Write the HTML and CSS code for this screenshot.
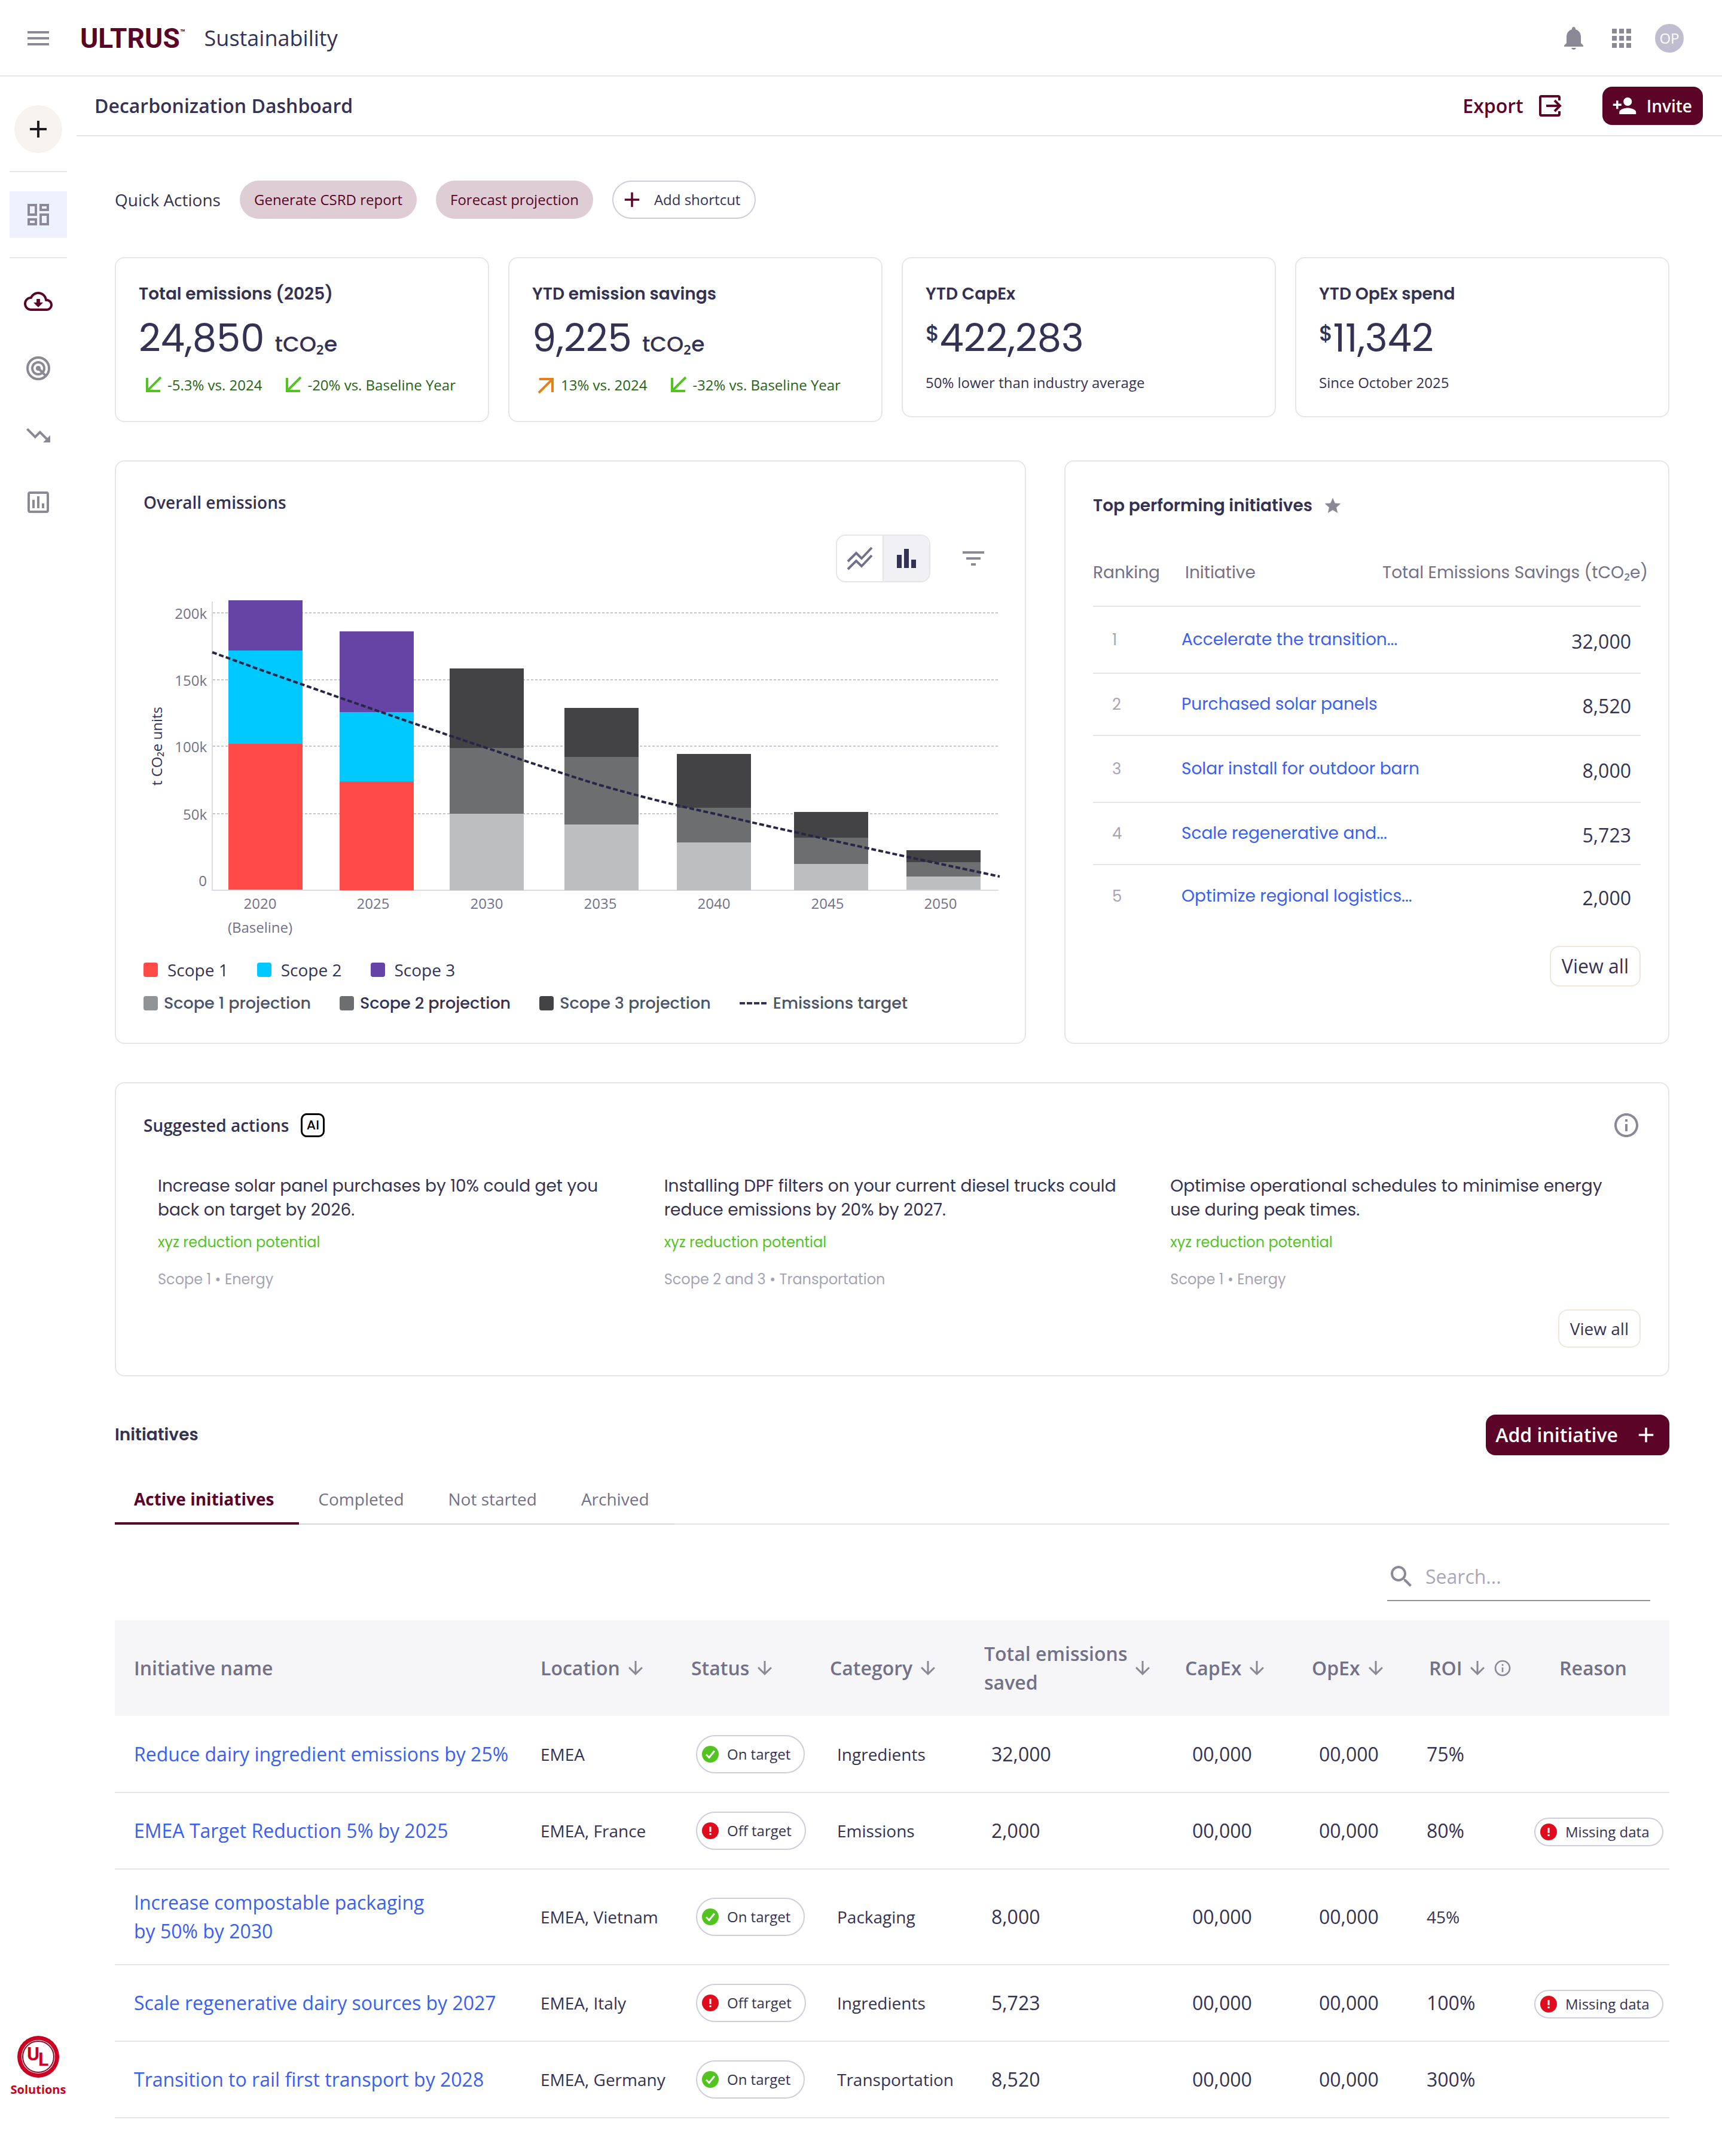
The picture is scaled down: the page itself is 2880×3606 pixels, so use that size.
FILE: index.html
```html
<!DOCTYPE html>
<html lang="en">
<head>
<meta charset="utf-8">
<title>ULTRUS Sustainability - Decarbonization Dashboard</title>
<link rel="stylesheet" href="styles.css">
</head>
<body>

<!-- Icon sprite -->
<svg class="sprite" aria-hidden="true">
  <symbol id="i-plus" viewBox="0 0 24 24"><path d="M19 13h-6v6h-2v-6H5v-2h6V5h2v6h6v2z"/></symbol>
  <symbol id="i-down" viewBox="0 0 24 24"><path d="M20 12l-1.41-1.41L13 16.17V4h-2v12.17l-5.58-5.59L4 12l8 8 8-8z"/></symbol>
  <symbol id="i-info" viewBox="0 0 24 24"><path d="M11 7h2v2h-2zm0 4h2v6h-2zm1-9C6.48 2 2 6.48 2 12s4.48 10 10 10 10-4.48 10-10S17.52 2 12 2zm0 18c-4.41 0-8-3.59-8-8s3.59-8 8-8 8 3.59 8 8-3.59 8-8 8z"/></symbol>
  <symbol id="i-fall" viewBox="0 0 32 32"><path d="M6 4v22h22M6.500 25.500L29 3" fill="none" stroke="currentColor" stroke-width="4"/></symbol>
  <symbol id="i-rise" viewBox="0 0 32 32"><path d="M4 6h22v22M25.500 6.500L3 29" fill="none" stroke="currentColor" stroke-width="4"/></symbol>
  <symbol id="i-ok" viewBox="0 0 28 28"><circle cx="14" cy="14" r="14" fill="#52c41f"/><path d="M7 14.500l5 5 9-11" fill="none" stroke="#fff" stroke-width="3"/></symbol>
  <symbol id="i-bad" viewBox="0 0 28 28"><circle cx="14" cy="14" r="14" fill="#e00b1c"/><path d="M12.500 7h3v9h-3zM12.500 18h3v3h-3z" fill="#fff"/></symbol>
</svg>

<header class="topbar">
  <button class="icon-btn menu-btn" aria-label="Menu"><svg class="icon" viewBox="0 0 24 24"><path d="M3 18h18v-2H3v2zm0-5h18v-2H3v2zm0-7v2h18V6H3z"/></svg></button>
  <a class="brand" href="#">ULTRUS<span class="tm">™</span></a>
  <span class="product">Sustainability</span>
  <div class="topbar-tools">
    <button class="icon-btn" aria-label="Notifications"><svg class="icon" viewBox="0 0 24 24"><path d="M12 21.500c1.100 0 2-.9 2-1.500h-4c0 .6.89 1.500 2 1.500zm6-5.500v-5c0-3.070-1.640-5.640-4.500-6.320V4c0-.83-.67-1.500-1.500-1.500s-1.500.67-1.500 1.500v.68C7.630 5.360 6 7.920 6 11v5l-2 2v1h16v-1l-2-2z"/></svg></button>
    <button class="icon-btn" aria-label="Apps"><svg class="icon" viewBox="0 0 24 24"><path d="M4 8h4V4H4v4zm6 12h4v-4h-4v4zm-6 0h4v-4H4v4zm0-6h4v-4H4v4zm6 0h4v-4h-4v4zm6-10v4h4V4h-4zm-6 4h4V4h-4v4zm6 6h4v-4h-4v4zm0 6h4v-4h-4v4z"/></svg></button>
    <button class="avatar">OP</button>
  </div>
</header>

<div class="app">
<nav class="sidebar" aria-label="Main">
  <button class="add-btn" aria-label="Add"><svg class="icon" viewBox="0 0 24 24"><use href="#i-plus"/></svg></button>
  <a class="nav-item ruled active" href="#" aria-label="Dashboard"><svg class="icon" viewBox="0 0 24 24"><path d="M19 5v2h-4V5h4M9 5v6H5V5h4m10 8v6h-4v-6h4M9 17v2H5v-2h4M21 3h-8v6h8V3zM11 3H3v10h8V3zm10 8h-8v10h8V11zm-10 4H3v6h8v-6z"/></svg></a>
  <a class="nav-item data" href="#" aria-label="Data collection"><svg class="icon" viewBox="0 0 24 24"><path d="M19.350 10.040C18.670 6.590 15.640 4 12 4 9.110 4 6.600 5.640 5.350 8.040 2.340 8.360 0 10.910 0 14c0 3.310 2.690 6 6 6h13c2.760 0 5-2.240 5-5 0-2.640-2.050-4.780-4.650-4.960zM19 18H6c-2.210 0-4-1.790-4-4 0-2.050 1.530-3.760 3.560-3.970l1.070-.11.5-.95C8.080 7.140 9.940 6 12 6c2.620 0 4.880 1.860 5.390 4.430l.3 1.500 1.530.11c1.560.1 2.780 1.410 2.780 2.960 0 1.650-1.350 3-3 3zm-5.550-8h-2.900v3H8l4 4 4-4h-2.550z"/></svg></a>
  <a class="nav-item" href="#" aria-label="Targets"><svg class="icon" viewBox="0 0 24 24"><g fill="none" stroke="currentColor" stroke-width="2"><circle cx="12" cy="12" r="9"/><circle cx="12" cy="12" r="5"/><path d="M12 12l6.500 6.500"/></g><circle cx="12" cy="12" r="2"/></svg></a>
  <a class="nav-item" href="#" aria-label="Reductions"><svg class="icon" viewBox="0 0 24 24"><path d="M16 18l2.290-2.290-4.880-4.880-4 4L2 7.410 3.410 6l6 6 4-4 6.300 6.290L22 12v6z"/></svg></a>
  <a class="nav-item" href="#" aria-label="Reports"><svg class="icon" viewBox="0 0 24 24"><path d="M9 17H7v-7h2v7zm4 0h-2V7h2v10zm4 0h-2v-4h2v4zm2 2H5V5h14v14zm0-16H5c-1.100 0-2 .9-2 2v14c0 1.100.9 2 2 2h14c1.100 0 2-.9 2-2V5c0-1.100-.9-2-2-2z"/></svg></a>
  <a class="ul-logo" href="#">
    <svg viewBox="0 0 70 70" aria-label="UL">
      <circle cx="35" cy="35" r="35" fill="#ca0123"/>
      <circle cx="35" cy="35" r="28" fill="#fff"/>
      <circle cx="35" cy="35" r="26" fill="none" stroke="#8a0a2a" stroke-width="2"/>
      <text x="16" y="41" class="ul-text">U</text>
      <text x="35" y="50" class="ul-text">L</text>
    </svg>
    <span>Solutions</span>
  </a>
</nav>

<main>
<div class="page-head">
  <h1>Decarbonization Dashboard</h1>
  <button class="export-btn">Export <svg class="icon" viewBox="0 0 48 48"><g fill="none" stroke="currentColor" stroke-width="4"><path d="M40 15V10q0-2-2-2H10q-2 0-2 2v28q0 2 2 2h28q2 0 2-2v-5"/><path d="M18 24h22M32 15l9 9-9 9"/></g></svg></button>
  <button class="primary-btn"><svg class="icon" viewBox="0 0 24 24"><path d="M15 12c2.210 0 4-1.790 4-4s-1.790-4-4-4-4 1.790-4 4 1.790 4 4 4zm-9-2V7H4v3H1v2h3v3h2v-3h3v-2H6zm9 4c-2.670 0-8 1.340-8 4v2h16v-2c0-2.660-5.330-4-8-4z"/></svg> Invite</button>
</div>

<div class="content">

<div class="quick">
  <span class="quick-label">Quick Actions</span>
  <button class="pill">Generate CSRD report</button>
  <button class="pill">Forecast projection</button>
  <button class="pill pill-outline"><svg class="icon" viewBox="0 0 24 24"><use href="#i-plus"/></svg> Add shortcut</button>
</div>

<section class="stats">
  <article class="card stat">
    <h2>Total emissions (2025)</h2>
    <p class="value">24,850 <span class="unit">tCO₂e</span></p>
    <p class="trends">
      <span class="trend down"><svg viewBox="0 0 32 32"><use href="#i-fall"/></svg>-5.3% vs. 2024</span>
      <span class="trend down"><svg viewBox="0 0 32 32"><use href="#i-fall"/></svg>-20% vs. Baseline Year</span>
    </p>
  </article>
  <article class="card stat">
    <h2>YTD emission savings</h2>
    <p class="value">9,225 <span class="unit">tCO₂e</span></p>
    <p class="trends">
      <span class="trend up"><svg viewBox="0 0 32 32"><use href="#i-rise"/></svg>13% vs. 2024</span>
      <span class="trend down"><svg viewBox="0 0 32 32"><use href="#i-fall"/></svg>-32% vs. Baseline Year</span>
    </p>
  </article>
  <article class="card stat">
    <h2>YTD CapEx</h2>
    <p class="value"><span class="cur">$</span>422,283</p>
    <p class="note">50% lower than industry average</p>
  </article>
  <article class="card stat">
    <h2>YTD OpEx spend</h2>
    <p class="value"><span class="cur">$</span>11,342</p>
    <p class="note">Since October 2025</p>
  </article>
</section>

<div class="panels">
<section class="card overall">
  <h2>Overall emissions</h2>
  <div class="chart-tools">
    <div class="toggle">
      <button aria-label="Line chart"><svg class="icon" viewBox="0 0 48 48"><g fill="none" stroke="currentColor" stroke-width="4"><path d="M4 29l14-14 9 9L44 6"/><path d="M4 42l14-14 9 9L44 19"/></g></svg></button>
      <button class="on" aria-label="Bar chart"><svg class="icon" viewBox="0 0 48 48"><path d="M8 18h8v22H8zM20 8h8v32h-8zM32 26h8v14h-8z"/></svg></button>
    </div>
    <button class="icon-btn" aria-label="Filter"><svg class="icon" viewBox="0 0 24 24"><path d="M10 18h4v-2h-4v2zM3 6v2h18V6H3zm3 7h12v-2H6v2z"/></svg></button>
  </div>

  <svg class="chart" viewBox="0 0 1428 576" role="img" aria-label="Emissions by scope, 2020 to 2050">
    <g class="grid">
      <path d="M116 25H1430M116 137H1430M116 248H1430M116 361H1430"/>
    </g>
    <path class="axis" d="M115 6V489H1430"/>
    <g class="y-labels">
      <text x="106" y="35">200k</text>
      <text x="106" y="147">150k</text>
      <text x="106" y="258">100k</text>
      <text x="106" y="371">50k</text>
      <text x="106" y="482">0</text>
    </g>
    <text class="axis-title" transform="translate(31 248) rotate(-90)">t CO₂e units</text>
    <g class="s1">
      <rect x="142" y="244" width="124" height="244"/>
      <rect x="328" y="307" width="124" height="182"/>
    </g>
    <g class="s2">
      <rect x="142" y="88" width="124" height="156"/>
      <rect x="328" y="191" width="124" height="116"/>
    </g>
    <g class="s3">
      <rect x="142" y="4" width="124" height="84"/>
      <rect x="328" y="56" width="124" height="135"/>
    </g>
    <g class="p1">
      <rect x="512" y="361" width="124" height="128"/>
      <rect x="704" y="379" width="124" height="110"/>
      <rect x="892" y="409" width="124" height="80"/>
      <rect x="1088" y="445" width="124" height="44"/>
      <rect x="1276" y="466" width="124" height="22"/>
    </g>
    <g class="p2">
      <rect x="512" y="251" width="124" height="110"/>
      <rect x="704" y="266" width="124" height="113"/>
      <rect x="892" y="351" width="124" height="58"/>
      <rect x="1088" y="401" width="124" height="44"/>
      <rect x="1276" y="442" width="124" height="24"/>
    </g>
    <g class="p3">
      <rect x="512" y="118" width="124" height="133"/>
      <rect x="704" y="184" width="124" height="82"/>
      <rect x="892" y="261" width="124" height="90"/>
      <rect x="1088" y="358" width="124" height="43"/>
      <rect x="1276" y="422" width="124" height="20"/>
    </g>
    <path class="target" d="M115 91L195 120C320 164 450 210 577 252C640 273 700 294 763 313C830 332 890 347 955 361C1080 390 1200 417 1432 466"/>
    <g class="x-labels">
      <text x="195" y="520">2020</text>
      <text x="195" y="560">(Baseline)</text>
      <text x="384" y="520">2025</text>
      <text x="574" y="520">2030</text>
      <text x="764" y="520">2035</text>
      <text x="954" y="520">2040</text>
      <text x="1144" y="520">2045</text>
      <text x="1333" y="520">2050</text>
    </g>
  </svg>

  <ul class="legend legend-actual">
    <li><i class="sw c1"></i>Scope 1</li>
    <li><i class="sw c2"></i>Scope 2</li>
    <li><i class="sw c3"></i>Scope 3</li>
  </ul>
  <ul class="legend legend-proj">
    <li><i class="sw c4"></i>Scope 1 projection</li>
    <li class="strong"><i class="sw c5"></i>Scope 2 projection</li>
    <li><i class="sw c6"></i>Scope 3 projection</li>
    <li><svg class="dash" viewBox="0 0 46 4"><path d="M0 2h46" stroke="#343254" stroke-width="4" stroke-dasharray="9 3"/></svg>Emissions target</li>
  </ul>
</section>

<section class="card top">
  <h2>Top performing initiatives <svg class="star" viewBox="0 0 24 24"><path d="M12 17.270L18.180 21l-1.640-7.030L22 9.240l-7.190-.61L12 2 9.190 8.630 2 9.240l5.460 4.730L5.820 21z"/></svg></h2>
  <table class="rank">
    <thead>
      <tr><th class="r-no">Ranking</th><th class="r-name">Initiative</th><th class="r-val"><span>Total Emissions Savings (tCO₂e)</span></th></tr>
    </thead>
    <tbody>
      <tr class="tall"><td>1</td><td><a href="#">Accelerate the transition...</a></td><td>32,000</td></tr>
      <tr><td>2</td><td><a href="#">Purchased solar panels</a></td><td>8,520</td></tr>
      <tr class="tall"><td>3</td><td><a href="#">Solar install for outdoor barn</a></td><td>8,000</td></tr>
      <tr><td>4</td><td><a href="#">Scale regenerative and...</a></td><td>5,723</td></tr>
      <tr><td>5</td><td><a href="#">Optimize regional logistics...</a></td><td>2,000</td></tr>
    </tbody>
  </table>
  <button class="ghost-btn large">View all</button>
</section>
</div>

<section class="card suggested">
  <div class="suggested-head">
    <h2>Suggested actions</h2><span class="ai">AI</span>
    <button class="icon-btn" aria-label="About suggestions"><svg class="icon" viewBox="0 0 24 24"><use href="#i-info"/></svg></button>
  </div>
  <div class="suggestions">
    <article>
      <p class="what">Increase solar panel purchases by 10% could get you<br>back on target by 2026.</p>
      <p class="gain">xyz reduction potential</p>
      <p class="scope">Scope 1 • Energy</p>
    </article>
    <article>
      <p class="what">Installing DPF filters on your current diesel trucks could<br>reduce emissions by 20% by 2027.</p>
      <p class="gain">xyz reduction potential</p>
      <p class="scope">Scope 2 and 3 • Transportation</p>
    </article>
    <article>
      <p class="what">Optimise operational schedules to minimise energy<br>use during peak times.</p>
      <p class="gain">xyz reduction potential</p>
      <p class="scope">Scope 1 • Energy</p>
    </article>
  </div>
  <button class="ghost-btn">View all</button>
</section>

<section class="initiatives">
  <div class="init-head">
    <h2>Initiatives</h2>
    <button class="primary-btn add-init">Add initiative <svg class="icon" viewBox="0 0 24 24"><use href="#i-plus"/></svg></button>
  </div>
  <div class="tabs" role="tablist">
    <button role="tab" class="tab active" aria-selected="true">Active initiatives</button>
    <button role="tab" class="tab">Completed</button>
    <button role="tab" class="tab">Not started</button>
    <button role="tab" class="tab">Archived</button>
  </div>
  <label class="search">
    <svg class="icon" viewBox="0 0 24 24"><path d="M15.500 14h-.79l-.28-.27C15.410 12.590 16 11.110 16 9.500 16 5.910 13.090 3 9.500 3S3 5.910 3 9.500 5.910 16 9.500 16c1.610 0 3.090-.59 4.230-1.570l.27.28v.79l5 4.990L20.490 19l-4.990-5zm-6 0C7.010 14 5 11.990 5 9.500S7.010 5 9.500 5 14 7.010 14 9.500 11.990 14 9.500 14z"/></svg>
    <input type="search" placeholder="Search..." aria-label="Search initiatives">
  </label>

  <table class="list">
    <colgroup>
      <col><col class="w-loc"><col class="w-status"><col class="w-cat"><col class="w-total"><col class="w-capex"><col class="w-opex"><col class="w-roi"><col class="w-reason">
    </colgroup>
    <thead>
      <tr>
        <th class="name">Initiative name</th>
        <th><button class="sort">Location <svg viewBox="0 0 24 24"><use href="#i-down"/></svg></button></th>
        <th><button class="sort">Status <svg viewBox="0 0 24 24"><use href="#i-down"/></svg></button></th>
        <th><button class="sort">Category <svg viewBox="0 0 24 24"><use href="#i-down"/></svg></button></th>
        <th><button class="sort"><span>Total emissions<br>saved</span> <svg viewBox="0 0 24 24"><use href="#i-down"/></svg></button></th>
        <th><button class="sort">CapEx <svg viewBox="0 0 24 24"><use href="#i-down"/></svg></button></th>
        <th><button class="sort">OpEx <svg viewBox="0 0 24 24"><use href="#i-down"/></svg></button></th>
        <th class="roi"><button class="sort">ROI <svg viewBox="0 0 24 24"><use href="#i-down"/></svg><svg class="info" viewBox="0 0 24 24"><use href="#i-info"/></svg></button></th>
        <th class="reason">Reason</th>
      </tr>
    </thead>
    <tbody>
      <tr>
        <td class="name"><a href="#">Reduce dairy ingredient emissions by 25%</a></td>
        <td class="small">EMEA</td>
        <td class="status"><span class="chip"><svg viewBox="0 0 28 28"><use href="#i-ok"/></svg>On target</span></td>
        <td class="small in">Ingredients</td>
        <td class="in">32,000</td><td class="in">00,000</td><td class="in">00,000</td><td>75%</td><td></td>
      </tr>
      <tr>
        <td class="name"><a href="#">EMEA Target Reduction 5% by 2025</a></td>
        <td class="small">EMEA, France</td>
        <td class="status"><span class="chip"><svg viewBox="0 0 28 28"><use href="#i-bad"/></svg>Off target</span></td>
        <td class="small in">Emissions</td>
        <td class="in">2,000</td><td class="in">00,000</td><td class="in">00,000</td><td>80%</td>
        <td><span class="chip flat"><svg viewBox="0 0 28 28"><use href="#i-bad"/></svg>Missing data</span></td>
      </tr>
      <tr class="tall">
        <td class="name"><a href="#">Increase compostable packaging<br>by 50% by 2030</a></td>
        <td class="small">EMEA, Vietnam</td>
        <td class="status"><span class="chip"><svg viewBox="0 0 28 28"><use href="#i-ok"/></svg>On target</span></td>
        <td class="small in">Packaging</td>
        <td class="in">8,000</td><td class="in">00,000</td><td class="in">00,000</td><td class="small">45%</td><td></td>
      </tr>
      <tr>
        <td class="name"><a href="#">Scale regenerative dairy sources by 2027</a></td>
        <td class="small">EMEA, Italy</td>
        <td class="status"><span class="chip"><svg viewBox="0 0 28 28"><use href="#i-bad"/></svg>Off target</span></td>
        <td class="small in">Ingredients</td>
        <td class="in">5,723</td><td class="in">00,000</td><td class="in">00,000</td><td>100%</td>
        <td><span class="chip flat"><svg viewBox="0 0 28 28"><use href="#i-bad"/></svg>Missing data</span></td>
      </tr>
      <tr>
        <td class="name"><a href="#">Transition to rail first transport by 2028</a></td>
        <td class="small">EMEA, Germany</td>
        <td class="status"><span class="chip"><svg viewBox="0 0 28 28"><use href="#i-ok"/></svg>On target</span></td>
        <td class="small in">Transportation</td>
        <td class="in">8,520</td><td class="in">00,000</td><td class="in">00,000</td><td>300%</td><td></td>
      </tr>
    </tbody>
  </table>
</section>

</div>
</main>
</div>

</body>
</html>
```
FILE: styles.css
```css
:root {
  --ink: #343254;
  --muted: #727188;
  --icon: #8a8995;
  --brand: #5b0428;
  --link: #3960f3;
  --line: #e6e6ea;
  --body: "Open Sans", "Noto Sans", sans-serif;
  --display: Poppins, "Noto Sans", sans-serif;
}

* { box-sizing: border-box; }

body {
  margin: 0;
  min-height: 100vh;
  display: flex;
  flex-direction: column;
  background: #fff;
  color: var(--ink);
  font: 28px/40px var(--body);
}

h1, h2, p, ul { margin: 0; padding: 0; }
h2 { font: 600 28px/40px var(--display); }
a { color: var(--link); text-decoration: none; }
table { border-collapse: collapse; width: 100%; }
th, td { padding: 0; text-align: left; font-weight: 400; }

button {
  padding: 0;
  border: 0;
  background: none;
  color: inherit;
  font: inherit;
  cursor: pointer;
}

svg { display: block; flex: none; fill: currentColor; }
.sprite { position: absolute; width: 0; height: 0; }
.icon { width: 48px; height: 48px; }
.icon-btn { color: var(--icon); }

/* Top bar */
.topbar {
  display: flex;
  align-items: center;
  height: 128px;
  padding: 2px 64px 0 40px;
  border-bottom: 2px solid var(--line);
}
.brand {
  display: flex;
  margin-left: 46px;
  color: var(--brand);
  font: 700 46px/48px Roboto, sans-serif;
}
.tm { font-size: 14px; line-height: 28px; }
.product { margin-left: 32px; font-size: 36px; line-height: 48px; }
.topbar-tools { display: flex; gap: 32px; margin-left: auto; }
.avatar {
  width: 48px;
  height: 48px;
  border-radius: 50%;
  background: #c0bdd0;
  color: #fff;
  font-size: 24px;
  line-height: 48px;
}

/* Side navigation */
.app { display: flex; flex: 1; }
.sidebar {
  display: flex;
  flex: none;
  flex-direction: column;
  align-items: center;
  width: 128px;
  padding: 48px 16px 100px;
}
.add-btn {
  display: flex;
  align-items: center;
  justify-content: center;
  width: 80px;
  height: 80px;
  margin-bottom: 30px;
  border-radius: 50%;
  background: #f7f4ef;
  color: #1d1b20;
}
.nav-item {
  display: flex;
  align-items: center;
  justify-content: center;
  width: 96px;
  height: 112px;
  color: var(--icon);
}
.ruled {
  height: 146px;
  margin-bottom: 16px;
  padding: 32px 0;
  border: solid var(--line);
  border-width: 2px 0;
}
.active.nav-item { background: #eef1ff content-box; }
.data { color: var(--brand); }
.ul-logo {
  display: flex;
  flex-direction: column;
  align-items: center;
  gap: 8px;
  margin-top: auto;
  color: #ca0123;
  font: 700 20px/24px var(--body);
}
.ul-logo svg { width: 70px; height: 70px; }
.ul-text { font: 700 32px Roboto, sans-serif; }

/* Page heading */
main { flex: 1; min-width: 0; }
.page-head {
  display: flex;
  align-items: center;
  height: 100px;
  padding: 0 32px 0 30px;
  border-bottom: 2px solid var(--line);
}
h1 { font: 600 32px/40px var(--body); }
.export-btn {
  display: flex;
  align-items: center;
  gap: 20px;
  margin-left: auto;
  color: var(--brand);
  font-size: 32px;
  font-weight: 600;
}
.primary-btn {
  display: flex;
  align-items: center;
  gap: 16px;
  height: 64px;
  margin-left: 64px;
  padding: 0 18px 0 16px;
  border-radius: 16px;
  background: var(--brand);
  color: #fff;
  font-size: 28px;
  font-weight: 600;
}
.primary-btn .icon { width: 42px; height: 42px; }

.content {
  display: flex;
  flex-direction: column;
  gap: 64px;
  padding: 74px 88px 64px 64px;
}

/* Quick actions */
.quick { display: flex; align-items: center; gap: 32px; }
.pill {
  display: flex;
  align-items: center;
  height: 64px;
  padding: 0 24px;
  border-radius: 32px;
  background: #decdd4;
  color: var(--brand);
  font-size: 24px;
}
.pill-outline {
  gap: 16px;
  padding: 0 24px 0 10px;
  border: 2px solid #cfcddc;
  background: #fff;
  color: var(--ink);
}
.pill-outline .icon { width: 42px; height: 42px; color: var(--brand); }

/* Cards */
.card { border: 2px solid var(--line); border-radius: 16px; }

.stats {
  display: grid;
  grid-template-columns: repeat(4, 1fr);
  align-items: start;
  gap: 32px;
}
.stat { padding: 40px 36px 40px 38px; }
.value { margin-top: 16px; font: 400 64px/76px var(--display); }
.unit { font-size: 36px; font-weight: 500; line-height: 36px; }
.cur { font-size: 36px; font-weight: 500; line-height: 36px; vertical-align: 18px; }
.trends {
  display: flex;
  gap: 36px;
  margin: 24px 0 4px 8px;
  white-space: nowrap;
}
.trend { display: flex; gap: 8px; color: #276414; font-size: 24px; line-height: 32px; }
.trend svg { width: 32px; height: 32px; }
.down svg { color: #52c41f; }
.up svg { color: #e8801a; }
.note { margin-top: 20px; font-size: 24px; line-height: 32px; }

.panels { display: grid; grid-template-columns: 1524fr 1012fr; gap: 64px; }
.overall { padding: 48px 46px 46px; }
.top { padding: 54px 46px 46px; }

/* Emissions chart */
.overall h2, .suggested h2 { font: 600 28px/40px var(--body); }
.chart-tools {
  display: flex;
  align-items: center;
  justify-content: flex-end;
  gap: 48px;
  margin: 34px 16px 26px 0;
}
.toggle {
  display: flex;
  overflow: hidden;
  border: 2px solid var(--line);
  border-radius: 16px;
  color: var(--muted);
}
.toggle button { padding: 14px; }
.toggle .on { border-left: 2px solid var(--line); background: #f1f0f4; color: var(--ink); }
.chart { width: 100%; overflow: visible; }
.chart text { font: 24px var(--body); fill: var(--muted); }
.grid path { stroke: #c5c4d2; stroke-width: 2; stroke-dasharray: 4 3; }
.axis { fill: none; stroke: #dcdbe4; stroke-width: 2; }
.y-labels { text-anchor: end; }
.x-labels, .axis-title { text-anchor: middle; }
.chart .axis-title { fill: var(--ink); }
.s1 { fill: #ff4a48; }
.s2 { fill: #00c9ff; }
.s3 { fill: #6644a6; }
.p1 { fill: #bdbec0; }
.p2 { fill: #6d6e70; }
.p3 { fill: #434345; }
.target { fill: none; stroke: #282647; stroke-width: 4; stroke-dasharray: 8 4; }

.legend { display: flex; list-style: none; }
.legend li { display: flex; align-items: center; }
.legend-actual { gap: 48px; margin-top: 26px; }
.legend-actual .sw { margin-right: 16px; }
.legend-proj { gap: 48px; margin-top: 16px; color: #4c5468; font: 500 27px/40px var(--display); }
.legend-proj .sw { margin-right: 10px; }
.strong { color: var(--ink); }
.sw { width: 24px; height: 24px; border-radius: 4px; }
.c1 { background: #ff4a48; }
.c2 { background: #00c9ff; }
.c3 { background: #6644a6; }
.c4 { background: #909497; }
.c5 { background: #6d6e70; }
.c6 { background: #434345; }
.dash { width: 46px; height: 4px; margin-right: 10px; }

/* Top performing initiatives */
.top h2 { display: flex; align-items: center; gap: 18px; }
.star { width: 32px; height: 32px; color: var(--icon); }
.rank { margin-top: 36px; table-layout: fixed; font-family: var(--display); white-space: nowrap; }
.rank th { height: 112px; color: var(--muted); }
.rank tr { height: 104px; border-bottom: 2px solid var(--line); }
.rank .tall { height: 112px; }
.rank tbody tr:last-child { border: 0; }
.r-no { width: 148px; }
.rank .r-name { width: 300px; padding-left: 6px; }
.rank .r-val { text-align: right; }
.r-val span { margin-right: -12px; }
.rank td:first-child { padding-left: 32px; color: #a5a4b4; font-size: 26px; }
.rank td:last-child {
  padding: 6px 16px 0 0;
  font: 32px/40px var(--body);
  text-align: right;
}
.ghost-btn {
  display: block;
  height: 64px;
  margin-left: auto;
  padding: 0 18px;
  border: 2px solid #eee8da;
  border-radius: 16px;
  font-weight: 500;
}
.large { height: 68px; margin-top: 32px; font-size: 32px; }

/* Suggested actions */
.suggested { padding: 46px; }
.suggested-head { display: flex; align-items: center; }
.suggested-head .icon-btn { margin-left: auto; }
.ai {
  width: 40px;
  height: 40px;
  margin-left: 20px;
  border: 3px solid #000;
  border-radius: 10px;
  color: #000;
  font: 500 22px/34px var(--display);
  text-align: center;
}
.suggestions {
  display: grid;
  grid-template-columns: repeat(3, 1fr);
  margin: 58px -60px 0 24px;
  font-family: var(--display);
}
.suggestions .what { white-space: nowrap; }
.gain { margin-top: 16px; color: #52c41f; font-size: 24px; line-height: 36px; }
.scope { margin-top: 26px; color: #a5a4b4; font-size: 24px; line-height: 36px; }
.suggested .ghost-btn { margin-top: 32px; }

/* Initiatives table */
.init-head { display: flex; align-items: center; justify-content: space-between; }
.add-init { gap: 26px; height: 68px; font-size: 32px; }
.tabs { display: flex; margin-top: 36px; border-bottom: 2px solid #e6e6e8; }
.tab {
  height: 80px;
  margin-bottom: -2px;
  padding: 0 42px 4px 32px;
  border-bottom: 2px solid #d6d6d8;
  color: var(--muted);
  font-weight: 500;
}
.active.tab { padding-bottom: 2px; border-bottom: 4px solid var(--brand); color: var(--brand); font-weight: 700; }
.search {
  display: flex;
  align-items: center;
  gap: 14px;
  width: 440px;
  height: 80px;
  margin: 48px 32px 32px auto;
  border-bottom: 2px solid #929199;
  color: var(--icon);
}
.search input {
  flex: 1;
  min-width: 0;
  border: 0;
  outline: 0;
  background: none;
  color: var(--ink);
  font: 32px/40px var(--body);
}
.search input::placeholder { color: #a9a8b8; }

.list { table-layout: fixed; font-size: 32px; line-height: 48px; }
.list thead { background: #f6f6f9; }
.list th { height: 160px; color: var(--muted); font-weight: 600; }
.list td { height: 128px; border-bottom: 2px solid var(--line); }
.list .tall td { height: 160px; }
.list .name { padding-left: 32px; }
.list .small { font-size: 28px; }
.list .in { padding-left: 12px; }
.list .status { padding-left: 8px; }
.list .roi { padding-left: 4px; }
.list .reason { padding-left: 42px; }
.w-loc { width: 252px; }
.w-status { width: 232px; }
.w-cat { width: 258px; }
.w-total { width: 336px; }
.w-capex { width: 212px; }
.w-opex { width: 192px; }
.w-roi { width: 180px; }
.w-reason { width: 226px; }
.sort { display: flex; align-items: center; gap: 8px; text-align: left; }
.sort svg { width: 36px; height: 36px; color: var(--icon); }
.sort .info { width: 32px; height: 32px; }
.chip {
  display: inline-flex;
  align-items: center;
  gap: 14px;
  height: 64px;
  padding: 0 22px 0 8px;
  border: 2px solid #cfcddc;
  border-radius: 32px;
  font-size: 24px;
  vertical-align: middle;
  white-space: nowrap;
}
.chip svg { width: 28px; height: 28px; }
.flat { height: 48px; }
```
